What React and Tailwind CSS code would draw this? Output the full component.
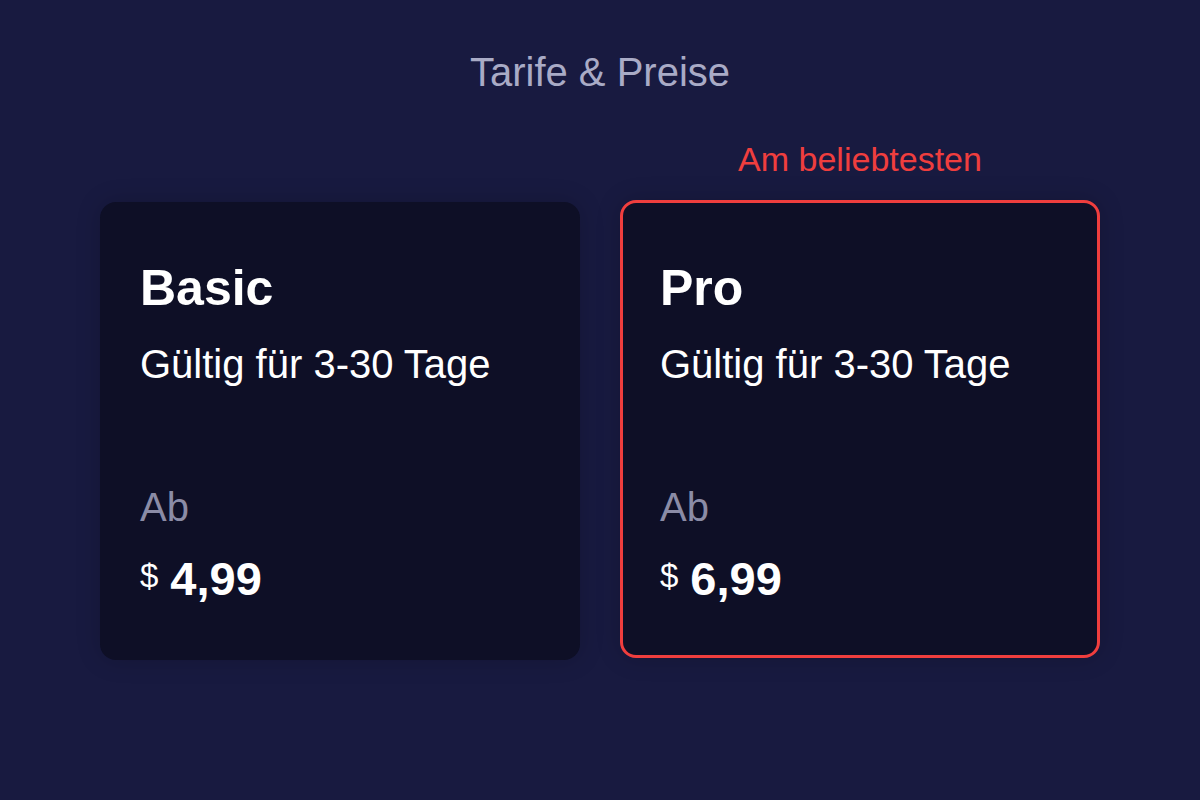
export default function App() {
  const plans = [
    { name: "Basic", valid: "Gültig für 3-30 Tage", price: "4,99", popular: false },
    { name: "Pro", valid: "Gültig für 3-30 Tage", price: "6,99", popular: true },
  ];

  return (
    <div className="min-h-[800px] w-full bg-[#181a40] font-['Liberation_Sans',Arial,sans-serif] pt-[52px]">
      <h1 className="text-center text-[40px] leading-none text-[#a9abc6]">Tarife &amp; Preise</h1>

      <div className="mx-auto mt-[50px] grid w-[1000px] grid-cols-2 gap-x-10">
        {/* label row */}
        <div />
        <div className="mb-[26px] text-center text-[34px] leading-none text-[#ef3e3e]">Am beliebtesten</div>

        {plans.map((plan) => (
          <div
            key={plan.name}
            className={
              plan.popular
                ? "-translate-y-0.5 h-[458px] rounded-2xl border-[3px] border-[#ef3e3e] bg-[#0e0f26] px-[37px] pt-[60px] shadow-[0_0_24px_rgba(0,0,0,0.18)]"
                : "h-[458px] rounded-2xl bg-[#0e0f26] px-10 pt-[61px] shadow-[0_0_24px_rgba(0,0,0,0.18)]"
            }
          >
            <h2 className="text-[50px] font-bold leading-none text-white">{plan.name}</h2>
            <p className="mt-[31px] text-[40px] leading-none text-white">{plan.valid}</p>
            <p className="mt-[103px] text-[40px] leading-none text-[#8b8ca6]">Ab</p>
            <div className="mt-[28px] flex items-start gap-3 leading-none text-white">
              <span className="mt-1 text-[33px]">$</span>
              <span className="text-[47px] font-bold">{plan.price}</span>
            </div>
          </div>
        ))}
      </div>
    </div>
  );
}
